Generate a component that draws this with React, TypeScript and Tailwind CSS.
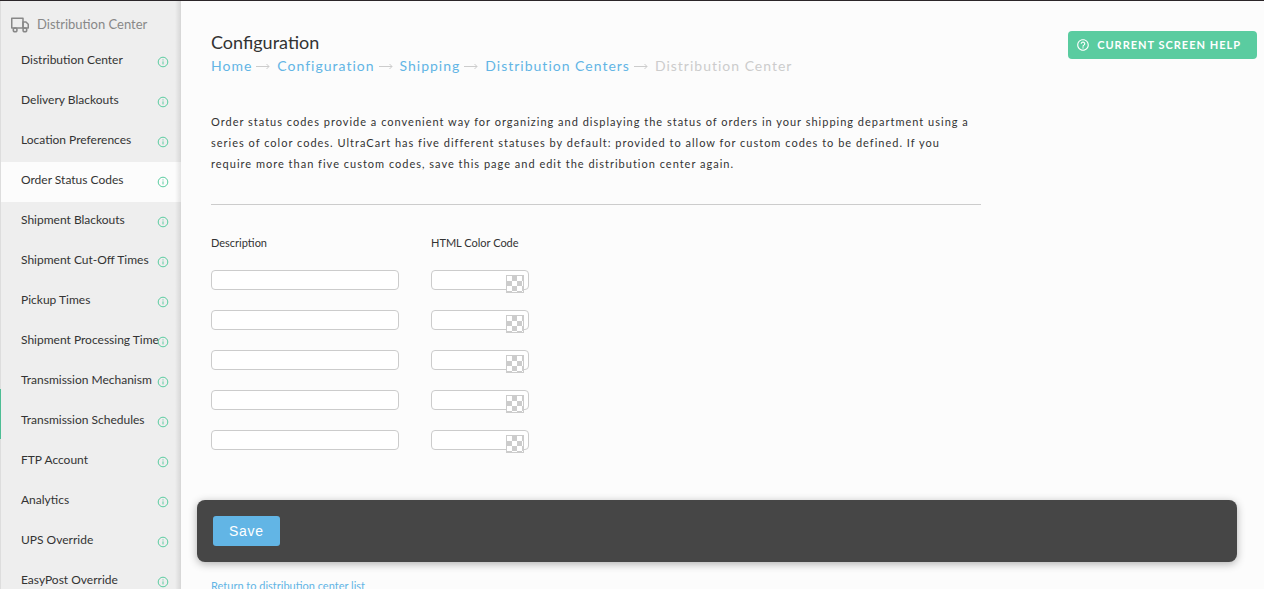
import React from "react";
import { FiTruck } from "react-icons/fi";
import { MdHelpOutline } from "react-icons/md";

const menu = [
  "Distribution Center",
  "Delivery Blackouts",
  "Location Preferences",
  "Order Status Codes",
  "Shipment Blackouts",
  "Shipment Cut-Off Times",
  "Pickup Times",
  "Shipment Processing Time",
  "Transmission Mechanism",
  "Transmission Schedules",
  "FTP Account",
  "Analytics",
  "UPS Override",
  "EasyPost Override",
];

const crumbs = ["Home", "Configuration", "Shipping", "Distribution Centers"];

function InfoIcon() {
  return (
    <svg viewBox="0 0 12 12" className="size-3 shrink-0" fill="none" stroke="#5acca0" aria-hidden="true">
      <circle cx="6" cy="6" r="4.8" strokeWidth="1" />
      <path d="M6 5.4v3M6 3.4v1" strokeWidth="1" />
    </svg>
  );
}

function Arrow() {
  return (
    <svg viewBox="0 0 14 8" className="mr-[7px] ml-1 h-2 w-[14px] shrink-0" fill="none" stroke="#cccccc" aria-hidden="true">
      <path d="M0 4.5H13M10.5 2L13 4.5L10.5 7" />
    </svg>
  );
}

function Checker() {
  return (
    <svg viewBox="0 0 18 18" className="size-[18px]" shapeRendering="crispEdges" aria-hidden="true">
      <rect width="18" height="18" fill="#cccccc" />
      <rect x="1" y="1" width="16" height="16" fill="#ffffff" />
      <path fill="#cccccc" d="M6 1h5v5h-5zM1 6h5v5h-5zM11 6h5v5h-5zM6 11h5v5h-5zM1 16h5v1h-5zM11 16h5v1h-5zM16 1h1v5h-1zM16 11h1v5h-1z" />
    </svg>
  );
}

export default function App() {
  return (
    <div className="flex h-screen overflow-hidden border-t border-[#2b2629] bg-[#fcfcfc] font-['Lato',sans-serif] text-[#333333]">
      <aside className="relative w-[181px] shrink-0 overflow-hidden border-l border-[#dddddd] bg-[#eeeeee]">
        <h2 className="flex h-[41px] items-center gap-2 pt-[6px] pl-[10px] text-[13px] text-[#888888]">
          <FiTruck className="size-[18px]" />
          Distribution Center
        </h2>
        <nav>
          <ul>
            {menu.map((item) => (
              <li key={item}>
                <a
                  href="#"
                  className={
                    "flex h-10 items-center justify-between pr-3 pl-5 text-xs " +
                    (item === "Order Status Codes" ? "bg-[#fcfcfc]" : "")
                  }
                >
                  <span className="w-0 pb-1 whitespace-nowrap">{item}</span>
                  <InfoIcon />
                </a>
              </li>
            ))}
          </ul>
        </nav>
        <div className="absolute inset-y-0 right-0 w-[6px] bg-linear-to-r from-transparent to-black/10" />
      </aside>
      <div className="fixed top-[389px] left-0 h-[50px] w-px bg-[#4dbd94]" />

      <main className="min-w-0 flex-1 overflow-hidden pr-[7px]">
        <header className="flex items-start justify-between pt-[29px] pl-[30px]">
          <div>
            <h1 className="text-lg leading-6">Configuration</h1>
            <nav aria-label="Breadcrumb" className="flex items-center text-sm leading-6 tracking-[1px] text-[#cccccc]">
              {crumbs.map((c) => (
                <React.Fragment key={c}>
                  <a href="#" className="text-[#62b5e5]">{c}</a>
                  <Arrow />
                </React.Fragment>
              ))}
              <span>Distribution Center</span>
            </nav>
          </div>
          <button
            type="button"
            className="mt-px flex h-7 items-center gap-[7px] rounded bg-[#5acca0] pr-4 pl-2 text-[11px] font-bold tracking-[1px] whitespace-nowrap text-white uppercase"
          >
            <MdHelpOutline className="size-[14px]" />
            Current Screen Help
          </button>
        </header>

        <section className="ml-[30px] max-w-[770px] border-b border-[#cccccc] pt-[33px] pb-[30px]">
          <p className="text-[11px] leading-[21px] tracking-[1px]">
            Order status codes provide a convenient way for organizing and displaying the status of orders in your
            shipping department using a series of color codes. UltraCart has five different statuses by default:
            provided to allow for custom codes to be defined. If you require more than five custom codes, save this
            page and edit the distribution center again.
          </p>
        </section>

        <form className="pt-[28px]">
          <table className="ml-[30px] text-left text-[11px]">
            <thead>
              <tr className="h-5">
                <th scope="col" className="w-[220px] p-0 font-normal">Description</th>
                <th scope="col" className="p-0 font-normal">HTML Color Code</th>
              </tr>
            </thead>
            <tbody>
              {[1, 2, 3, 4, 5].map((n) => (
                <tr key={n} className="h-10">
                  <td className="p-0 pt-[17px] align-top">
                    <input
                      type="text"
                      aria-label={"Description " + n}
                      className="block h-5 w-[188px] rounded border border-[#cccccc] bg-white px-1"
                    />
                  </td>
                  <td className="p-0 pt-[17px] align-top">
                    <div className="relative w-[98px]">
                      <input
                        type="text"
                        aria-label={"HTML Color Code " + n}
                        className="block h-5 w-full rounded border border-[#cccccc] bg-white px-1"
                      />
                      <button type="button" aria-label="Pick color" className="absolute top-[5px] right-[5px] block">
                        <Checker />
                      </button>
                    </div>
                  </td>
                </tr>
              ))}
            </tbody>
          </table>

          <div className="mt-[47px] mr-5 ml-4 rounded-lg bg-[#464646] p-4 shadow-[0_2px_8px_rgba(0,0,0,0.3)]">
            <button
              type="submit"
              className="block h-[30px] rounded-[3px] bg-[#62b5e5] px-4 font-['Liberation_Sans',sans-serif] text-sm tracking-wider text-white"
            >
              Save
            </button>
          </div>
        </form>

        <a href="#" className="mt-4 ml-[30px] inline-block text-[11px] leading-4 text-[#62b5e5]">
          Return to distribution center list
        </a>
      </main>
    </div>
  );
}
